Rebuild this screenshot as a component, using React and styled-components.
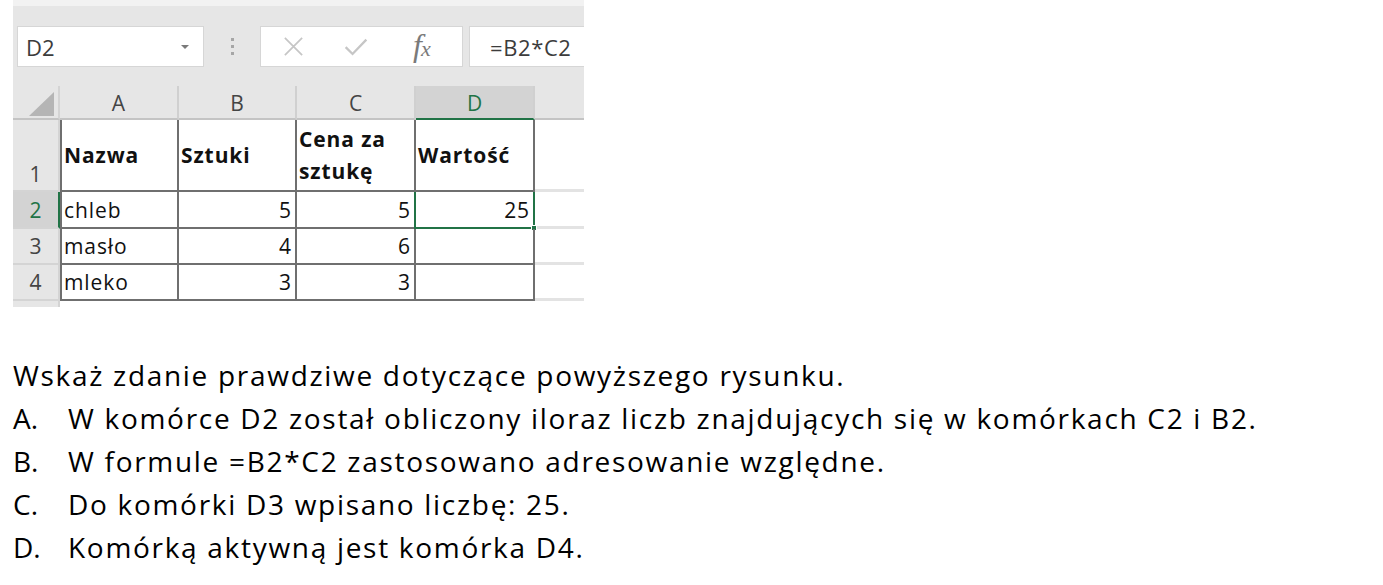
import React from 'react'
import styled, { createGlobalStyle } from 'styled-components'

const GlobalStyle = createGlobalStyle`
    html, body {
        margin: 0;
        padding: 0;
        background: #ffffff;
    }
    * {
        box-sizing: border-box;
    }
`

const columns = ['A', 'B', 'C', 'D']

const rows = [
    { num: 1, tall: true, cells: ['Nazwa', 'Sztuki', 'Cena za\nsztukę', 'Wartość'] },
    { num: 2, cells: ['chleb', '5', '5', '25'] },
    { num: 3, cells: ['masło', '4', '6', ''] },
    { num: 4, cells: ['mleko', '3', '3', ''] },
]

const answers = [
    ['A.', 'W komórce D2 został obliczony iloraz liczb znajdujących się w komórkach C2 i B2.'],
    ['B.', 'W formule =B2*C2 zastosowano adresowanie względne.'],
    ['C.', 'Do komórki D3 wpisano liczbę: 25.'],
    ['D.', 'Komórką aktywną jest komórka D4.'],
]

function App () {
    return (
        <Page>
            <GlobalStyle />

            <Excel>
                <FormulaBar>
                    <NameBox>
                        <span>D2</span>
                        <DropArrow />
                    </NameBox>

                    <Grip>
                        <i /><i /><i />
                    </Grip>

                    <ButtonsBox>
                        <BarIcon viewBox="0 0 20 20" width="23" height="23">
                            <path d="M2.5 2.5 L17.5 17.5 M17.5 2.5 L2.5 17.5" stroke="#c6c6c6" strokeWidth="1.5" fill="none" />
                        </BarIcon>
                        <BarIcon viewBox="0 0 22 20" width="26" height="23">
                            <path d="M2 10.5 L8 16.5 L20 4" stroke="#c6c6c6" strokeWidth="2" fill="none" />
                        </BarIcon>
                        <Fx><i>f</i><small>x</small></Fx>
                    </ButtonsBox>

                    <FormulaInput>=B2*C2</FormulaInput>
                </FormulaBar>

                <Sheet>
                    <Corner>
                        <svg width="25" height="24" viewBox="0 0 25 24">
                            <polygon points="25,0 25,24 0,24" fill="#b5b5b5" />
                        </svg>
                    </Corner>
                    { columns.map(c => (
                        <ColHead key={ c } active={ c === 'D' }>{ c }</ColHead>
                    )) }
                    <ColHead extra />

                    { rows.map(r => (
                        <React.Fragment key={ r.num }>
                            <RowHead active={ r.num === 2 } tall={ r.tall }>{ r.num }</RowHead>
                            { r.cells.map((v, i) => (
                                <Cell
                                    key={ i }
                                    first={ i === 0 }
                                    bold={ r.num === 1 }
                                    numeric={ r.num > 1 && i > 0 }
                                    active={ r.num === 2 && i === 3 }
                                >
                                    { v }
                                    { r.num === 2 && i === 3 && <FillHandle /> }
                                </Cell>
                            )) }
                            <EmptyCell />
                        </React.Fragment>
                    )) }

                    <RowHead cut />
                    <CutCell />
                    <CutCell />
                    <CutCell />
                    <CutCell />
                    <CutCell />
                </Sheet>
            </Excel>

            <Question>
                <p>Wskaż zdanie prawdziwe dotyczące powyższego rysunku.</p>
                { answers.map(([letter, text]) => (
                    <Answer key={ letter }>
                        <Letter>{ letter }</Letter>
                        <span>{ text }</span>
                    </Answer>
                )) }
            </Question>
        </Page>
    )
}

export default App

const uiFont = `"Open Sans", "Noto Sans", sans-serif`

const Page = styled.div`
    width: 1383px;
    height: 585px;
    overflow: hidden;
    background: #fff;
`

const Excel = styled.div`
    margin-left: 13px;
    width: 571px;
    background: #e6e6e6;
    border-top: 6px solid #f2f2f2;
`

const FormulaBar = styled.div`
    display: flex;
    align-items: stretch;
    height: 41px;
    margin-top: 20px;
    padding-left: 4px;
`

const NameBox = styled.div`
    width: 187px;
    background: #fff;
    border: 1px solid #d6d6d6;
    display: flex;
    align-items: center;
    justify-content: space-between;
    padding: 0 14px 0 8px;
    font-family: ${ uiFont };
    font-size: 22px;
    color: #3c3c3c;
`

const DropArrow = styled.span`
    width: 0;
    height: 0;
    border-left: 4px solid transparent;
    border-right: 4px solid transparent;
    border-top: 4px solid #7a7a7a;
`

const Grip = styled.div`
    width: 56px;
    display: flex;
    flex-direction: column;
    align-items: center;
    justify-content: center;
    gap: 4px;

    i {
        display: block;
        width: 3px;
        height: 3px;
        background: #a6a6a6;
    }
`

const ButtonsBox = styled.div`
    width: 203px;
    background: #fff;
    border: 1px solid #d6d6d6;
    display: flex;
    align-items: center;
    padding-left: 21px;
    gap: 38px;
`

const BarIcon = styled.svg`
    display: block;
`

const Fx = styled.div`
    font-family: "Liberation Serif", "DejaVu Serif", serif;
    color: #7a7a7a;
    font-size: 32px;
    line-height: 1;
    margin-left: 6px;
    margin-top: -3px;
    letter-spacing: -1px;
    i {
        font-style: italic;
    }
    small {
        font-style: italic;
        font-size: 22px;
    }
`

const FormulaInput = styled.div`
    flex: 1;
    margin-left: 6px;
    background: #fff;
    border: 1px solid #d6d6d6;
    border-right: none;
    display: flex;
    align-items: center;
    padding-left: 20px;
    font-family: ${ uiFont };
    font-size: 22px;
    letter-spacing: 0.6px;
    color: #3c3c3c;
`

const Sheet = styled.div`
    margin-top: 19px;
    display: grid;
    grid-template-columns: 47px 119px 118px 119px 119px 49px;
    grid-template-rows: 34px 72px 37px 36px 36px 6px;
    background: #fff;
`

const headFont = `
    font-family: ${ uiFont };
    font-size: 21px;
    color: #444;
`

const Corner = styled.div`
    background: #e6e6e6;
    border-bottom: 2px solid #c4c4c4;
    border-right: 2px solid #d4d4d4;
    display: flex;
    align-items: flex-end;
    justify-content: flex-end;
    padding: 0 4px 2px 0;
`

const ColHead = styled.div`
    ${ headFont }
    background: ${ p => p.active ? '#d3d3d3' : '#e6e6e6' };
    color: ${ p => p.active ? '#217346' : '#444' };
    border-right: ${ p => p.extra ? 'none' : '2px solid #d0d0d0' };
    border-bottom: 2px solid ${ p => p.active ? '#217346' : '#c4c4c4' };
    display: flex;
    align-items: center;
    justify-content: center;
    padding-top: 2px;
`

const RowHead = styled.div`
    ${ headFont }
    background: ${ p => p.active ? '#d3d3d3' : '#e6e6e6' };
    color: ${ p => p.active ? '#217346' : '#444' };
    border-right: 2px solid ${ p => p.active ? '#217346' : '#d4d4d4' };
    border-bottom: ${ p => p.cut ? 'none' : '2px solid #d4d4d4' };
    display: flex;
    justify-content: center;
    align-items: ${ p => p.tall ? 'flex-end' : 'center' };
    padding-bottom: ${ p => p.tall ? '2px' : '0' };
`

const Cell = styled.div`
    position: relative;
    font-family: ${ uiFont };
    font-size: 21px;
    letter-spacing: 0.9px;
    font-weight: ${ p => p.bold ? 700 : 400 };
    color: #111;
    line-height: 32px;
    white-space: pre-line;
    display: flex;
    align-items: center;
    justify-content: ${ p => p.numeric ? 'flex-end' : 'flex-start' };
    padding: 0 3px 0 2px;
    border-bottom: 2px solid #6f6f6f;
    border-right: 2px solid #6f6f6f;
    border-left: ${ p => p.first ? '2px solid #6f6f6f' : 'none' };
    ${ p => p.active && `
        border: 2px solid #217346;
        border-top: none;
        margin-left: -2px;
        padding-left: 4px;
    ` }
`

const FillHandle = styled.span`
    position: absolute;
    right: -4px;
    bottom: -4px;
    width: 6px;
    height: 6px;
    background: #217346;
    border: 1px solid #fff;
`

const EmptyCell = styled.div`
    border-bottom: 3px solid #e3e3e3;
`

const CutCell = styled.div`
    background: #fff;
`

const Question = styled.div`
    margin-top: 47px;
    padding-left: 13px;
    font-family: ${ uiFont };
    font-size: 28px;
    letter-spacing: 1.7px;
    line-height: 43px;
    color: #000;

    p {
        margin: 0;
    }
`

const Answer = styled.div`
    display: flex;
`

const Letter = styled.span`
    width: 55px;
    flex-shrink: 0;
    letter-spacing: 0;
`
